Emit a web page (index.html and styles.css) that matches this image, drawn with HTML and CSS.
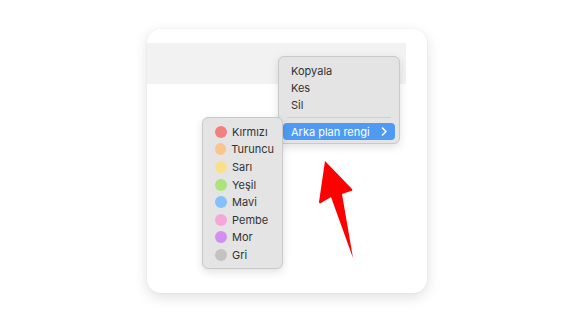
FILE: index.html
```html
<!DOCTYPE html>
<html lang="tr">
<head>
  <meta charset="UTF-8">
  <meta name="viewport" content="width=device-width, initial-scale=1.0">
  <title>Arka plan rengi</title>
  <link rel="stylesheet" href="styles.css">
</head>
<body>
  <div class="card">
    <div class="toolbar"></div>

    <!-- main context menu -->
    <ul class="menu context-menu">
      <li class="menu-item">Kopyala</li>
      <li class="menu-item">Kes</li>
      <li class="menu-item">Sil</li>
      <li class="separator"></li>
      <li class="menu-item active">
        <span>Arka plan rengi</span>
        <svg class="chevron" width="7" height="9" viewBox="0 0 7 9">
          <path d="M1.5 1 L5 4.5 L1.5 8" fill="none" stroke="#fff" stroke-width="1.6" stroke-linecap="round" stroke-linejoin="round"/>
        </svg>
      </li>
    </ul>

    <!-- colour submenu -->
    <ul class="menu color-menu">
      <li class="menu-item"><span class="dot red"></span>Kırmızı</li>
      <li class="menu-item"><span class="dot orange"></span>Turuncu</li>
      <li class="menu-item"><span class="dot yellow"></span>Sarı</li>
      <li class="menu-item"><span class="dot green"></span>Yeşil</li>
      <li class="menu-item"><span class="dot blue"></span>Mavi</li>
      <li class="menu-item"><span class="dot pink"></span>Pembe</li>
      <li class="menu-item"><span class="dot purple"></span>Mor</li>
      <li class="menu-item"><span class="dot gray"></span>Gri</li>
    </ul>

    <svg class="arrow" width="40" height="100" viewBox="0 0 40 100">
      <path d="M9 1 L36 29 Q37 31 35 31 L26 34 L37 98 L15 37 L5 43 Q3 44 3 42 Z" fill="#ff0000"/>
    </svg>
  </div>
</body>
</html>
```

FILE: styles.css
```css
body {
  margin: 0;
  height: 322px;
  display: flex;
  justify-content: center;
  align-items: center;
  background: #fff;
  font-family: Inter, "Noto Sans", sans-serif;
  color: #333;
}

.card {
  position: relative;
  width: 280px;
  height: 264px;
  background: #fff;
  border-radius: 14px;
  box-shadow: 0 4px 14px rgba(0, 0, 0, 0.13), 0 0 2px rgba(0, 0, 0, 0.06);
}

.toolbar {
  margin-top: 14px;
  width: 259px;
  height: 41px;
  background: #f2f2f2;
}

.menu {
  position: absolute;
  margin: 0;
  padding: 5px 4px;
  list-style: none;
  background: #e4e4e4;
  border: 1px solid #c9c9c9;
  border-radius: 6px;
  box-shadow: 0 3px 8px rgba(0, 0, 0, 0.12);
  box-sizing: border-box;
  font-size: 11px;
}

.menu-item {
  display: flex;
  align-items: center;
  height: 17px;
  padding: 0 8px;
  border-radius: 4px;
}

.context-menu {
  left: 131px;
  top: 27px;
  width: 122px;
  height: 88px;
}

.separator {
  height: 1px;
  margin: 4px 4px 5px;
  background: #cfcfcf;
}

.menu-item.active {
  justify-content: space-between;
  background: #4f9bf4;
  color: #fff;
  padding-right: 7px;
}

.color-menu {
  left: 55px;
  top: 88px;
  width: 81px;
  height: 152px;
  padding: 5px 0;
}

.color-menu .menu-item {
  height: 17.6px;
  padding-left: 12px;
}

.dot {
  width: 12px;
  height: 12px;
  border-radius: 50%;
  margin-right: 5px;
}

.red { background: #f38080; }
.orange { background: #fbc48d; }
.yellow { background: #fbe08a; }
.green { background: #ace37a; }
.blue { background: #84c1fb; }
.pink { background: #f6a7d9; }
.purple { background: #d28ef0; }
.gray { background: #c2c2c2; }

.arrow {
  position: absolute;
  left: 169px;
  top: 131px;
}
```
